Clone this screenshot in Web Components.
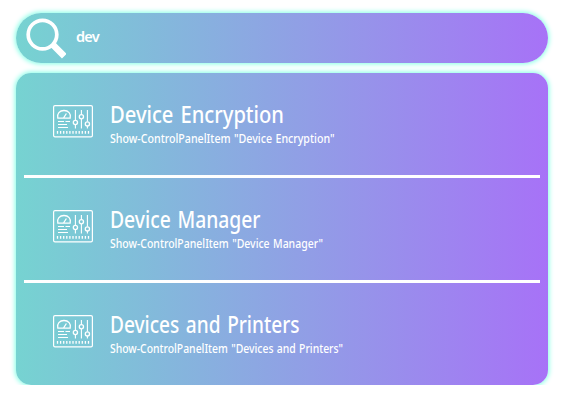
<!DOCTYPE html>
<html lang="en"><head><meta charset="utf-8"><title>Search</title>
<style>body{margin:0;padding:13px 24px 0 16px;background:#fff;color:#fff;font-family:"Noto Sans","Open Sans",sans-serif;--fill:linear-gradient(90deg,#76d3d1,#a772f7);--glow:0 0 5px 1px #80ffe6}</style></head><body>
<search-bar>dev</search-bar>
<result-list>
<result-item name="Device Encryption" name-width="174" command='Show-ControlPanelItem "Device Encryption"' command-width="224.5"></result-item>
<result-item name="Device Manager" name-width="150.5" command='Show-ControlPanelItem "Device Manager"' command-width="213"></result-item>
<result-item name="Devices and Printers" name-width="189.5" command='Show-ControlPanelItem "Devices and Printers"' command-width="233"></result-item>
</result-list>
<script>
customElements.define('search-bar',class extends HTMLElement{constructor(){super();this.attachShadow({mode:'open'}).innerHTML=`
<style>:host{display:flex;box-sizing:border-box;height:50px;padding-left:10px;gap:10px;border-radius:25px;background:var(--fill);box-shadow:var(--glow);font:600 14.5px/47px "Noto Sans",sans-serif;letter-spacing:-.75px}svg{flex:none}</style>
<svg width="40" height="50" fill="none" stroke="#fff"><circle cx="16.5" cy="21.6" r="14.3" stroke-width="3.7"/><path d="M26.5 31.7 29 34.2" stroke-width="4"/><path d="M29.4 34.2 36 40.9" stroke-width="6.5" stroke-linecap="square"/></svg><span><slot></slot></span>`}});
customElements.define('result-list',class extends HTMLElement{constructor(){super();this.attachShadow({mode:'open'}).innerHTML=`
<style>:host{display:block;box-sizing:border-box;height:312px;margin-top:10px;padding:0 8px;border-radius:15px;background:var(--fill);box-shadow:var(--glow)}::slotted(result-item:not(:last-child)){border-bottom:3px solid #fff}</style><slot></slot>`}});
customElements.define('panel-icon',class extends HTMLElement{constructor(){super();
let ticks='';for(let i=0;i<11;i++)ticks+=`M${4.5+i*3.1} 26v2.7`;
this.attachShadow({mode:'open'}).innerHTML=`
<style>:host{display:block;width:40px;height:33px}svg{display:block}</style>
<svg width="40" height="33" fill="none" stroke="#fff" stroke-width="1.1"><rect x=".6" y=".6" width="38.8" height="31.3" rx="1.4" stroke-width="1.2"/>
<path d="M4.8 13.2C3.6 8.6 6.8 5.5 11 5.5S18.4 8.6 17.2 13.2ZM10.5 13 13.4 8.5" stroke-width="1.3"/>
<path d="M5 16.5h6M12.5 16.5h4.5M5 19.5h9M5 22.5h10"/>
<path d="M22.4 5v10.3M22.4 19.7v3.8M28.4 5v4.6M28.4 14v9.5M34.4 5v11.6M34.4 21.1v2.4"/>
<circle cx="22.4" cy="17.5" r="2.1" stroke-width="1.3"/><circle cx="28.4" cy="11.8" r="2.1" stroke-width="1.3"/><circle cx="34.4" cy="18.9" r="2.1" stroke-width="1.3"/>
<path d="${ticks}" stroke-width="1.3"/></svg>`}});
customElements.define('result-item',class extends HTMLElement{connectedCallback(){const a=n=>this.getAttribute(n);this.attachShadow({mode:'open'}).innerHTML=`
<style>:host{display:flex;box-sizing:border-box;height:105px;padding:32px 0 0 29px;gap:17px}svg{display:block;overflow:visible;fill:#fff}.name{font-size:23px;font-weight:500;word-spacing:2px}.command{font-size:12px;font-weight:500;word-spacing:.8px}</style>
<panel-icon></panel-icon><svg width="260" height="42"><text class="name" x="0" y="18" textLength="${a('name-width')}" lengthAdjust="spacingAndGlyphs">${a('name')}</text><text class="command" x="0" y="38" textLength="${a('command-width')}" lengthAdjust="spacingAndGlyphs">${a('command')}</text></svg>`}});
</script></body></html>
